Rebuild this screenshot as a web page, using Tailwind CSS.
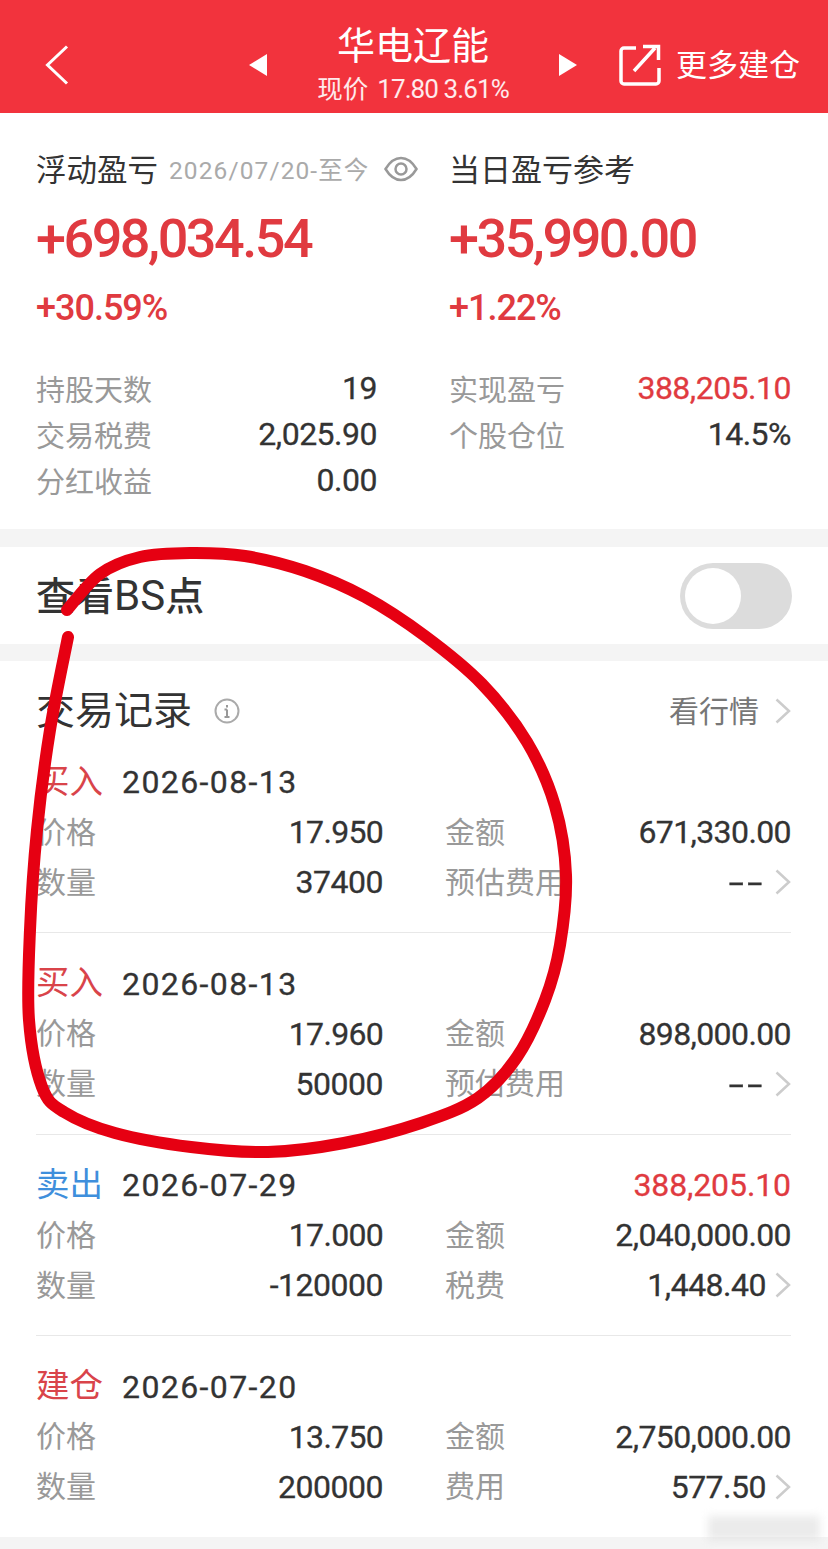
<!DOCTYPE html>
<html lang="zh-CN">
<head>
    <meta charset="UTF-8">
    <meta name="viewport" content="width=device-width, initial-scale=1.0">
    <title>华电辽能</title>
    <script src="https://cdn.jsdelivr.net/npm/@tailwindcss/browser@4"></script>
</head>
<body class="bg-[#f4f4f4] font-['Roboto','Noto_Sans_CJK_SC',sans-serif]">
<div class="relative w-[828px] h-[1549px] overflow-hidden">

    <!-- header -->
    <header class="flex h-[113px] pt-[14px] items-center bg-[#f2333d] text-white">
        <div class="w-[228px] pl-[45px]">
            <svg width="24" height="40" viewBox="0 0 24 40" fill="none" stroke="#fff" stroke-width="3" class="mt-[2px]"><path d="M22 1.500 2.500 20 22 38.500"/></svg>
        </div>
        <svg width="20" height="24" viewBox="0 0 20 24" class="ml-[20px] mt-[2px]"><path d="M19 1v22L1 12z" fill="#fff"/></svg>
        <div class="w-[290px] flex flex-col items-center">
            <div class="text-[38px] leading-[46px]">华电辽能</div>
            <div class="text-[25.500px] leading-[32px] mt-[4px] text-white/90 whitespace-nowrap">现价<span class="ml-[9px] text-[26px] tracking-[-0.900px]">17.80 3.61%</span></div>
        </div>
        <svg width="20" height="24" viewBox="0 0 20 24" class="mt-[2px]"><path d="M1 1v22l18-11z" fill="#fff"/></svg>
        <svg width="42" height="42" viewBox="0 0 42 42" fill="none" stroke="#fff" stroke-width="3.500" class="ml-[41px] mt-[2px]"><path d="M17 4H5a3 3 0 0 0-3 3v30a3 3 0 0 0 3 3h32a3 3 0 0 0 3-3V24"/><path d="M15 27 36 4M24 2.500h15.500V16"/></svg>
        <div class="ml-[15px] mt-[4px] text-[31px] leading-none whitespace-nowrap">更多建仓</div>
    </header>

    <!-- position summary -->
    <section class="h-[416px] bg-white pl-[36px] pr-[37px] pt-[38px] grid grid-cols-[413px_1fr]">
        <div class="w-[341px]">
            <div class="flex items-center h-[40px] text-[30.500px] text-[#333] whitespace-nowrap">
                浮动盈亏<span class="ml-[11px] text-[24.500px] tracking-[1.100px] text-[#aaa]">2026/07/20-至今</span>
                <svg width="34" height="26" viewBox="0 0 34 26" fill="none" stroke="#999" stroke-width="2.500" class="ml-[15px] -translate-y-[2px] shrink-0"><path d="M1.500 13C6 5.500 11 2 17 2s11 3.500 15.500 11C28 20.500 23 24 17 24S6 20.500 1.500 13z"/><circle cx="17" cy="13" r="5.500"/></svg>
            </div>
            <div class="mt-[20px] text-[54px] leading-[56px] tracking-[-2.500px] font-medium text-[#e03a40] whitespace-nowrap">+698,034.54</div>
            <div class="mt-[21px] text-[36px] leading-[40px] tracking-[-1px] font-medium text-[#e03a40]">+30.59%</div>
            <div class="mt-[39px] flex flex-col">
                <div class="flex justify-between items-center h-[46px]"><span class="pt-[4px] text-[29px] text-[#999]">持股天数</span><span class="pb-[4px] text-[32px] tracking-[-0.500px] [-webkit-text-stroke:0.3px_#333] text-[#333]">19</span></div>
                <div class="flex justify-between items-center h-[46px]"><span class="pt-[4px] text-[29px] text-[#999]">交易税费</span><span class="pb-[4px] text-[32px] tracking-[-0.500px] [-webkit-text-stroke:0.3px_#333] text-[#333]">2,025.90</span></div>
                <div class="flex justify-between items-center h-[46px]"><span class="pt-[4px] text-[29px] text-[#999]">分红收益</span><span class="pb-[4px] text-[32px] tracking-[-0.500px] [-webkit-text-stroke:0.3px_#333] text-[#333]">0.00</span></div>
            </div>
        </div>
        <div>
            <div class="flex items-center h-[40px] text-[31px] text-[#333] whitespace-nowrap">当日盈亏参考</div>
            <div class="mt-[20px] text-[54px] leading-[56px] tracking-[-2.500px] font-medium text-[#e03a40] whitespace-nowrap">+35,990.00</div>
            <div class="mt-[21px] text-[36px] leading-[40px] tracking-[-1px] font-medium text-[#e03a40]">+1.22%</div>
            <div class="mt-[39px] flex flex-col">
                <div class="flex justify-between items-center h-[46px]"><span class="pt-[4px] text-[29px] text-[#999]">实现盈亏</span><span class="pb-[4px] text-[32px] tracking-[-0.500px] [-webkit-text-stroke:0.3px_#e03a40] text-[#e03a40]">388,205.10</span></div>
                <div class="flex justify-between items-center h-[46px]"><span class="pt-[4px] text-[29px] text-[#999]">个股仓位</span><span class="pb-[4px] text-[32px] tracking-[-0.500px] [-webkit-text-stroke:0.3px_#333] text-[#333]">14.5%</span></div>
            </div>
        </div>
    </section>

    <!-- BS toggle -->
    <section class="mt-[18px] h-[97px] bg-white pl-[36px] pr-[36px] flex items-center justify-between">
        <span class="text-[39px] font-medium text-[#333] whitespace-nowrap">查看<span class="text-[42px] font-normal">BS</span>点</span>
        <div class="w-[112px] h-[66px] rounded-full bg-[#dcdcdc] p-[5px]">
            <div class="w-[56px] h-[56px] rounded-full bg-white"></div>
        </div>
    </section>

    <!-- trade records -->
    <section class="mt-[17px] h-[876px] bg-white pl-[36px] pr-[37px]">
        <div class="flex items-center justify-between h-[96px] pt-[4px]">
            <div class="flex items-center">
                <span class="text-[39px] text-[#333]">交易记录</span>
                <svg width="26" height="26" viewBox="0 0 26 26" fill="none" class="ml-[22px]"><circle cx="13" cy="13" r="11.500" stroke="#aaa" stroke-width="2"/><path d="M13 7v2.500M13 11.500V19M10.500 11.500H13M10.500 19h5" stroke="#999" stroke-width="2"/></svg>
            </div>
            <div class="flex items-center">
                <span class="text-[30px] text-[#777]">看行情</span>
                <svg width="16" height="26" viewBox="0 0 16 26" fill="none" stroke="#ccc" stroke-width="2.500" class="ml-[16px]"><path d="M1.500 1.500 14 13 1.500 24.500"/></svg>
            </div>
        </div>
        <div id="records" class="flex flex-col gap-[25.500px]"></div>
    </section>

    <!-- hand drawn circle -->
    <svg class="absolute left-0 top-0 pointer-events-none" width="828" height="1549" viewBox="0 0 828 1549" fill="none" stroke="#e60012" stroke-width="12" stroke-linecap="round" stroke-linejoin="round">
        <path id="circle"/>
    </svg>

    <!-- blurred watermark -->
    <div class="absolute left-[708px] top-[1516px] w-[112px] h-[24px] bg-[#d8d8d8]/50 blur-[4px]"></div>
</div>

<script>
    const records = [
        { type: '买入', color: 'text-[#d9444a]', date: '2026-08-13', price: '17.950', qty: '37400', amount: '671,330.00', feeName: '预估费用', fee: '--' },
        { type: '买入', color: 'text-[#d9444a]', date: '2026-08-13', price: '17.960', qty: '50000', amount: '898,000.00', feeName: '预估费用', fee: '--' },
        { type: '卖出', color: 'text-[#3f8fdc]', date: '2026-07-29', price: '17.000', qty: '-120000', amount: '2,040,000.00', feeName: '税费', fee: '1,448.40', profit: '388,205.10' },
        { type: '建仓', color: 'text-[#d9444a]', date: '2026-07-20', price: '13.750', qty: '200000', amount: '2,750,000.00', feeName: '费用', fee: '577.50' }
    ];

    const chevron = '<svg width="16" height="26" viewBox="0 0 16 26" fill="none" stroke="#ccc" stroke-width="2.500" class="ml-[9px]"><path d="M1.500 1.500 14 13 1.500 24.500"/></svg>';

    document.querySelector('#records').innerHTML = records.map((r, i) => {
        const fee = r.fee === '--'
            ? '<span class="inline-block whitespace-nowrap origin-right scale-x-[1.700] tracking-[2px]">--</span>'
            : r.fee;
        return `
        <div class="h-[176px] ${i < records.length - 1 ? 'border-b border-[#e8e8e8]' : ''}">
            <div class="flex items-center justify-between h-[50px]">
                <div class="flex items-center">
                    <span class="text-[33.500px] ${r.color}">${r.type}</span>
                    <span class="ml-[19px] text-[32px] tracking-[1.400px] [-webkit-text-stroke:0.3px_#333] text-[#333]">${r.date}</span>
                </div>
                <span class="text-[32px] tracking-[-0.100px] [-webkit-text-stroke:0.3px_#e03a40] text-[#e03a40]">${r.profit || ''}</span>
            </div>
            <div class="grid grid-cols-[347px_62px_1fr] h-[50px] items-center">
                <div class="flex justify-between items-center"><span class="text-[30px] text-[#999]">价格</span><span class="text-[32px] tracking-[-0.700px] [-webkit-text-stroke:0.3px_#333] text-[#333]">${r.price}</span></div>
                <div></div>
                <div class="flex justify-between items-center"><span class="text-[30px] text-[#999]">金额</span><span class="text-[32px] tracking-[-0.600px] [-webkit-text-stroke:0.3px_#333] text-[#333]">${r.amount}</span></div>
            </div>
            <div class="grid grid-cols-[347px_62px_1fr] h-[50px] items-center">
                <div class="flex justify-between items-center"><span class="text-[30px] text-[#999]">数量</span><span class="text-[32px] tracking-[-0.500px] [-webkit-text-stroke:0.3px_#333] text-[#333]">${r.qty}</span></div>
                <div></div>
                <div class="flex justify-between items-center"><span class="text-[30px] text-[#999]">${r.feeName}</span><span class="flex items-center text-[32px] tracking-[-0.500px] [-webkit-text-stroke:0.3px_#333] text-[#333]">${fee}${chevron}</span></div>
            </div>
        </div>`;
    }).join('');

    // smooth line through points read off the marker stroke
    const pts = [[67,610],[100,574],[140,557],[190,553],[245,556],[305,571],[365,597],[425,636],[482,684],[527,742],[555,806],[566,875],[560,945],[545,1000],[517,1057],[478,1098],[421,1123],[344,1143],[268,1152],[191,1147],[115,1133],[64,1112],[42,1087],[29,1020],[30,930],[37,830],[50,730],[68,637]];
    let d = `M${pts[0][0]} ${pts[0][1]}`;
    for (let i = 0; i < pts.length - 1; i++) {
        const p0 = pts[i - 1] || pts[i], p1 = pts[i], p2 = pts[i + 1], p3 = pts[i + 2] || p2;
        d += `C${p1[0] + (p2[0] - p0[0]) / 6} ${p1[1] + (p2[1] - p0[1]) / 6} ${p2[0] - (p3[0] - p1[0]) / 6} ${p2[1] - (p3[1] - p1[1]) / 6} ${p2[0]} ${p2[1]}`;
    }
    document.querySelector('#circle').setAttribute('d', d);
</script>
</body>
</html>
